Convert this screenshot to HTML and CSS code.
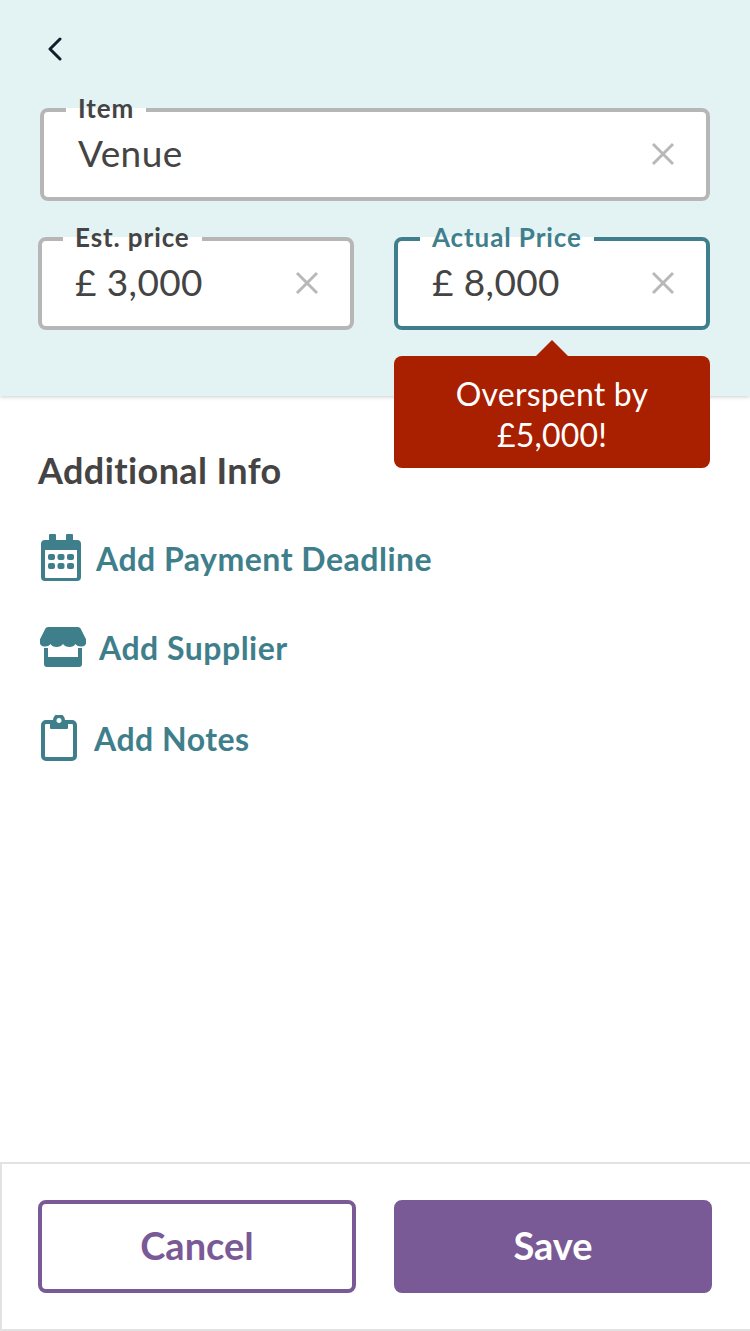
FILE: index.html
```html
<!DOCTYPE html>
<html lang="en">
<head>
    <meta charset="UTF-8">
    <meta name="viewport" content="width=device-width, initial-scale=1.0">
    <title>Edit item</title>
    <link rel="stylesheet" href="styles.css">
</head>
<body>
    <div class="top">
        <svg class="back" width="14" height="24" viewBox="0 0 14 24">
            <path d="M12 2 L2 12 L12 22" fill="none" stroke="#10202a" stroke-width="3" stroke-linecap="round" stroke-linejoin="round"/>
        </svg>

        <fieldset class="field field-wide">
            <legend>Item</legend>
            <div class="value">
                <span>Venue</span>
                <svg class="clear" width="24" height="24" viewBox="0 0 24 24"><path d="M2 2 L22 22 M22 2 L2 22"/></svg>
            </div>
        </fieldset>

        <div class="prices">
            <fieldset class="field field-est">
                <legend>Est. price</legend>
                <div class="value">
                    <span>£ 3,000</span>
                    <svg class="clear" width="24" height="24" viewBox="0 0 24 24"><path d="M2 2 L22 22 M22 2 L2 22"/></svg>
                </div>
            </fieldset>

            <div class="actual">
                <fieldset class="field active">
                    <legend>Actual Price</legend>
                    <div class="value">
                        <span>£ 8,000</span>
                        <svg class="clear" width="24" height="24" viewBox="0 0 24 24"><path d="M2 2 L22 22 M22 2 L2 22"/></svg>
                    </div>
                </fieldset>
                <div class="tooltip">Overspent by<br>£5,000!</div>
            </div>
        </div>
    </div>

    <main>
        <h2>Additional Info</h2>

        <a class="add">
            <svg class="icon-calendar" width="42" height="48" viewBox="0 0 42 48">
                <path fill-rule="evenodd" d="M10 0 h5 a1 1 0 0 1 1 1 v5 h10 v-5 a1 1 0 0 1 1 -1 h5 a1 1 0 0 1 1 1 v5 h4 a4 4 0 0 1 4 4 v33 a4 4 0 0 1 -4 4 h-32 a4 4 0 0 1 -4 -4 v-33 a4 4 0 0 1 4 -4 h4 v-5 a1 1 0 0 1 1 -1 z M5 16 v27 a1 1 0 0 0 1 1 h30 a1 1 0 0 0 1 -1 v-27 z"/>
                <rect x="8" y="20" width="7" height="6" rx="2"/>
                <rect x="17.500" y="20" width="7" height="6" rx="2"/>
                <rect x="27" y="20" width="7" height="6" rx="2"/>
                <rect x="8" y="29" width="7" height="6" rx="2"/>
                <rect x="17.500" y="29" width="7" height="6" rx="2"/>
                <rect x="27" y="29" width="7" height="6" rx="2"/>
            </svg>
            Add Payment Deadline
        </a>

        <a class="add">
            <svg class="icon-store" width="46" height="40" viewBox="0 0 46 40">
                <path d="M8 0 h30 a3 3 0 0 1 2.600 1.500 l5 10 a5 5 0 0 1 -4.600 8 c-3 0 -4.500 -1 -5.500 -2.500 c-1 2 -3.500 3 -6 3 c-3 0 -5 -1.200 -6.500 -3 c-1.500 1.800 -3.500 3 -6.500 3 c-2.500 0 -5 -1 -6 -3 c-1 1.500 -2.500 2.500 -5.500 2.500 a5 5 0 0 1 -4.600 -8 l5 -10 a3 3 0 0 1 2.600 -1.500 z"/>
                <path d="M4 21 h4 v9 h30 v-9 h4 v16 a3 3 0 0 1 -3 3 h-32 a3 3 0 0 1 -3 -3 z"/>
            </svg>
            Add Supplier
        </a>

        <a class="add add-notes">
            <svg class="icon-notes" width="36" height="46" viewBox="0 0 36 46">
                <path fill="none" stroke="#3f7f8c" stroke-width="4" d="M9 7 h-4 a3 3 0 0 0 -3 3 v31 a3 3 0 0 0 3 3 h26 a3 3 0 0 0 3 -3 v-31 a3 3 0 0 0 -3 -3 h-4"/>
                <path fill-rule="evenodd" d="M9 5 h3 a6 6 0 0 1 12 0 h3 v8 a1 1 0 0 1 -1 1 h-16 a1 1 0 0 1 -1 -1 z M18 3 a2.500 2.500 0 1 0 0.010 0 z"/>
            </svg>
            Add Notes
        </a>
    </main>

    <footer>
        <button class="cancel">Cancel</button>
        <button class="save">Save</button>
    </footer>
</body>
</html>
```

FILE: styles.css
```css
*{
    box-sizing: border-box;
    margin: 0;
}

body{
    display: flex;
    flex-direction: column;
    height: 1331px;
    background-color: #fff;
    color: #444;
    font-family: "Lato", "Noto Sans", sans-serif;
    overflow: hidden;
}

.top{
    padding: 37px 40px 66px 38px;
    background-color: #e3f2f3;
    box-shadow: 0 1px 4px rgba(0, 0, 0, 0.2);
}

.back{
    display: block;
    margin-left: 10px;
    margin-bottom: 33px;
}

.field{
    min-width: 0;
    padding: 0 31px 19px 34px;
    border: 4px solid #b6b6b6;
    border-radius: 8px;
    background-color: #fff;
}

.field-wide{
    margin-left: 2px;
}

.field-est{
    padding-left: 33px;
}

.field legend{
    margin-left: -12px;
    padding: 0 12px 4px;
    font-size: 26px;
    font-weight: 700;
    letter-spacing: 0.9px;
    line-height: 28px;
    color: #444;
}

.value{
    display: flex;
    align-items: center;
    justify-content: space-between;
    height: 52px;
    font-size: 37px;
    letter-spacing: 0.4px;
}

.value .clear{
    margin-top: 4px;
}

.clear{
    fill: none;
    stroke: #b8b8b8;
    stroke-width: 3;
}

.prices{
    display: grid;
    grid-template-columns: 316px 316px;
    gap: 40px;
    margin-top: 22px;
}

.actual{
    position: relative;
}

.active{
    border-color: #3f7f8c;
}

.active legend{
    color: #3f7f8c;
}

.tooltip{
    position: absolute;
    top: 133px;
    left: 0;
    width: 316px;
    height: 112px;
    padding-top: 17px;
    border-radius: 8px;
    background-color: #a92000;
    color: #fff;
    font-size: 32px;
    letter-spacing: 0.2px;
    line-height: 41px;
    text-align: center;
}

.tooltip::before{
    content: "";
    position: absolute;
    top: -16px;
    left: 142px;
    border-left: 16px solid transparent;
    border-right: 16px solid transparent;
    border-bottom: 16px solid #a92000;
}

main{
    flex: 1;
    padding: 54px 38px 0;
}

h2{
    margin-bottom: 44px;
    font-size: 36px;
    font-weight: 700;
    letter-spacing: 0.4px;
    line-height: 40px;
}

.add{
    display: flex;
    align-items: center;
    height: 48px;
    margin-bottom: 41px;
    color: #3f7f8c;
    font-size: 32px;
    font-weight: 700;
    letter-spacing: 0.5px;
}

.add-notes{
    margin-top: 43px;
}

.add svg{
    fill: #3f7f8c;
}

.icon-calendar{
    margin-left: 2px;
    margin-right: 14px;
}

.icon-store{
    margin-left: 2px;
    margin-right: 13px;
}

.icon-notes{
    margin-left: 3px;
    margin-right: 17px;
}

footer{
    display: grid;
    grid-template-columns: 318px 318px;
    gap: 38px;
    height: 169px;
    padding: 36px 0 0 36px;
    border: 2px solid #e2e2e2;
    border-right: 0;
}

button{
    height: 93px;
    padding-bottom: 4px;
    border: 4px solid #795a96;
    border-radius: 8px;
    font-family: inherit;
    font-size: 38px;
    font-weight: 700;
}

.cancel{
    background-color: #fff;
    color: #795a96;
}

.save{
    background-color: #795a96;
    color: #fff;
}
```
